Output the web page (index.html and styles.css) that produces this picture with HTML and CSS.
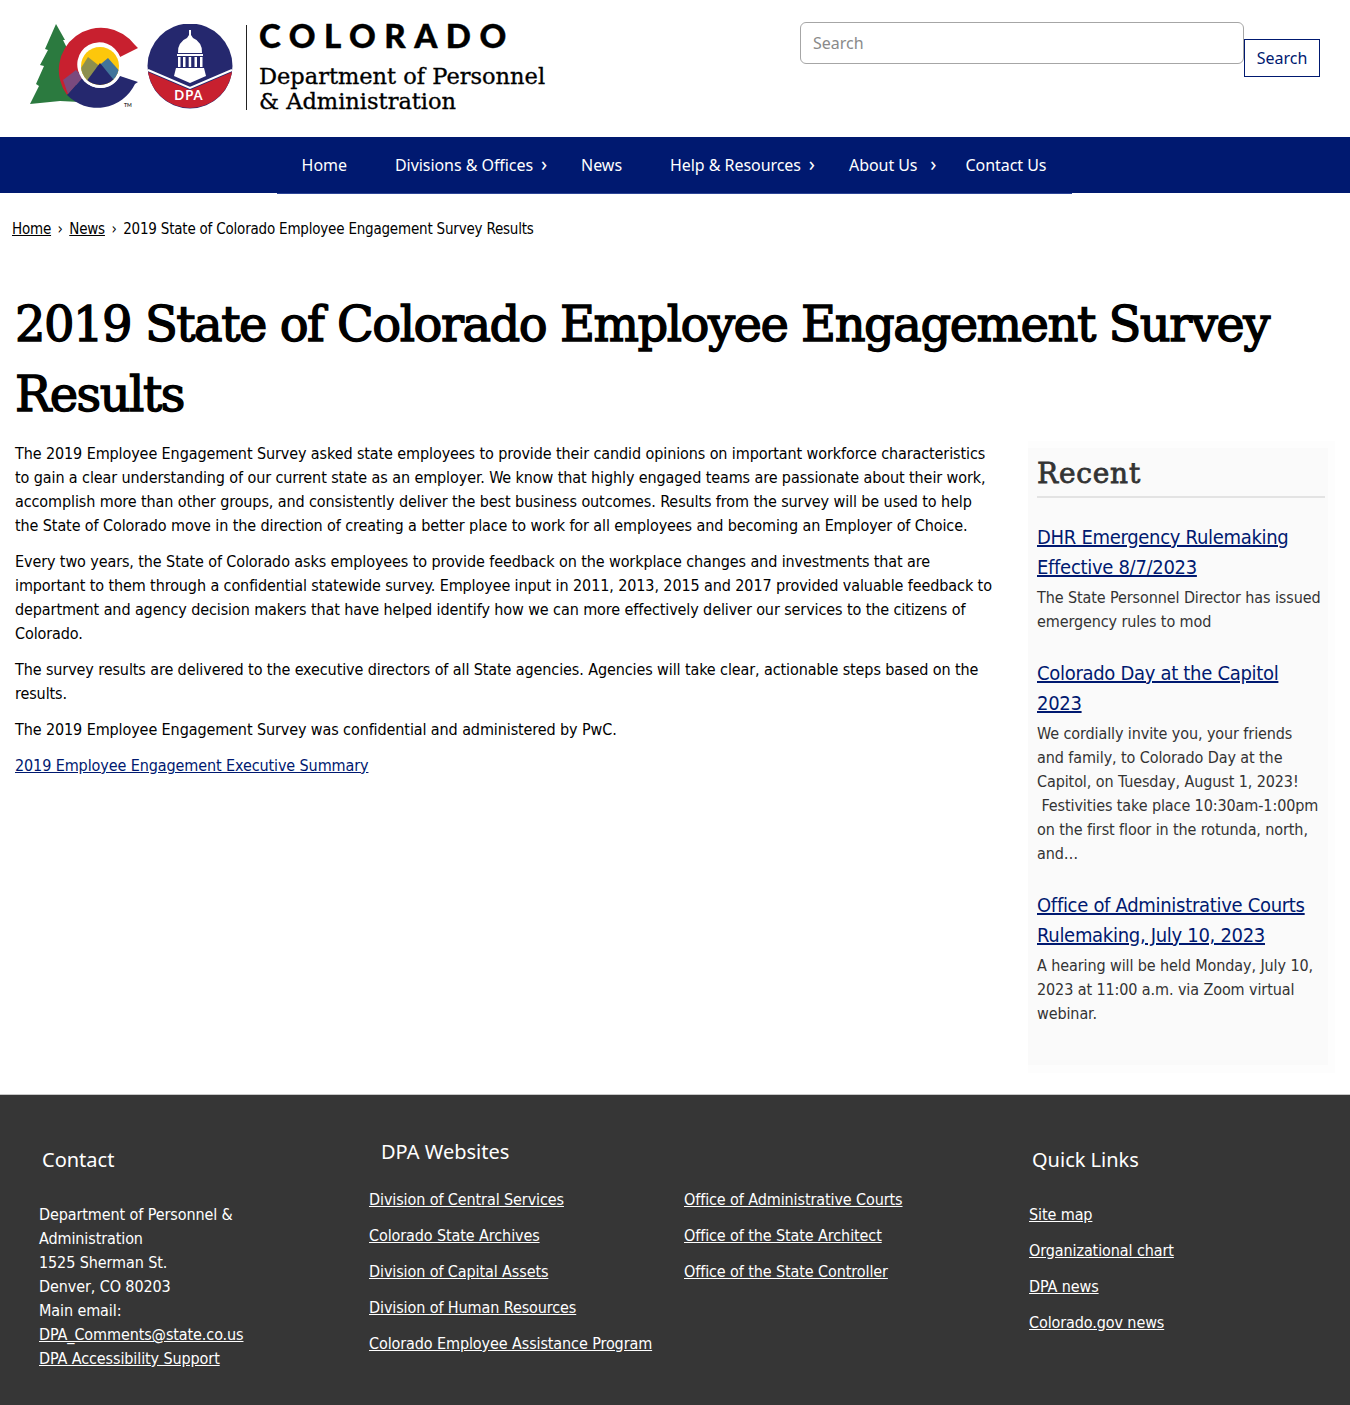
FILE: index.html
```html
<!DOCTYPE html>
<html lang="en">
<head>
<meta charset="utf-8">
<title>2019 State of Colorado Employee Engagement Survey Results</title>
<link rel="stylesheet" href="styles.css">
</head>
<body>
<header class="top">
  <a class="logo" href="#">
    <svg class="marks" width="206" height="90" viewBox="0 0 206 90">
      <path fill="#2b7a3f" d="M26 0 L35 16 L33 16 L39 28 L37 28 L44 50 L50 78 L30 77 L0 80 L9 62 L6 60 L14 42 L10 41 L18 26 L15 25 Z"/>
      <path fill="#c8202f" d="M108 24 L105 21 A42 42 0 1 0 37 71 L52 54 A22 22 0 1 1 90 33 Z"/>
      <path fill="#25286e" d="M37 71 A42 42 0 0 0 105 60 L108 58 L90 52 A22 22 0 0 1 52 54 Z"/>
      <path fill="#7a4a7e" d="M33 56 L46 46 L53 53 L38 70 Z"/>
      <circle cx="70" cy="42" r="22" fill="#fff"/>
      <clipPath id="sun"><circle cx="70" cy="42" r="19"/></clipPath>
      <g clip-path="url(#sun)">
        <rect x="48" y="20" width="44" height="44" fill="#fdc70b"/>
        <path fill="#8d8f4e" d="M46 52 L58 33 L72 44 L56 60 Z"/>
        <path fill="#41749a" d="M66 44 L78 34 L94 52 L84 56 Z"/>
        <path fill="#25286e" d="M50 66 L70 39 L92 66 Z"/>
      </g>
      <circle cx="160" cy="42" r="42.5" fill="#25286e"/>
      <path fill="#c8202f" d="M118 48 L160 66 L202 48 A42.5 42.5 0 0 1 118 48 Z"/>
      <path fill="none" stroke="#fff" stroke-width="2" d="M118 46 L160 64 L202 46"/>
      <path fill="#fff" d="M159 6 h2 v5 l2 3 a14 14 0 0 1 9 15 h-24 a14 14 0 0 1 9 -15 l2 -3 Z M147 30 h26 v2 h-26 Z M148 33 h2.500 v10 h-2.500 Z M153 33 h2.500 v10 h-2.500 Z M158.700 33 h2.500 v10 h-2.500 Z M164.500 33 h2.500 v10 h-2.500 Z M170 33 h2.500 v10 h-2.500 Z M146 44 h28 l2 8 l-16 7 l-16 -7 Z"/>
    </svg>
    <span class="rule"></span>
    <span class="wordmark">
      <span class="state">COLORADO</span>
      <span class="dept">Department of Personnel<br>&amp; Administration</span>
    </span>
    <span class="dpa-mark">DPA</span>
    <span class="tm">TM</span>
  </a>
  <form class="search">
    <input class="search-input" type="text" placeholder="Search">
    <button class="search-btn" type="button">Search</button>
  </form>
</header>

<nav class="nav">
  <ul class="nav-list">
    <li class="nav-item"><a href="#">Home</a></li>
    <li class="nav-item has-sub"><a href="#">Divisions &amp; Offices</a></li>
    <li class="nav-item"><a href="#">News</a></li>
    <li class="nav-item has-sub"><a href="#">Help &amp; Resources</a></li>
    <li class="nav-item has-sub wide"><a href="#">About Us</a></li>
    <li class="nav-item"><a href="#">Contact Us</a></li>
  </ul>
</nav>

<div class="crumbs"><a href="#">Home</a><span class="sep">›</span><a href="#">News</a><span class="sep">›</span><span>2019 State of Colorado Employee Engagement Survey Results</span></div>

<h1 class="title">2019 State of Colorado Employee Engagement Survey Results</h1>

<main class="layout">
  <article class="body-text">
    <p>The 2019 Employee Engagement Survey asked state employees to provide their candid opinions on important workforce characteristics to gain a clear understanding of our current state as an employer. We know that highly engaged teams are passionate about their work, accomplish more than other groups, and consistently deliver the best business outcomes. Results from the survey will be used to help the State of Colorado move in the direction of creating a better place to work for all employees and becoming an Employer of Choice.</p>
    <p>Every two years, the State of Colorado asks employees to provide feedback on the workplace changes and investments that are important to them through a confidential statewide survey. Employee input in 2011, 2013, 2015 and 2017 provided valuable feedback to department and agency decision makers that have helped identify how we can more effectively deliver our services to the citizens of Colorado.</p>
    <p>The survey results are delivered to the executive directors of all State agencies. Agencies will take clear, actionable steps based on the results.</p>
    <p>The 2019 Employee Engagement Survey was confidential and administered by PwC.</p>
    <p><a href="#">2019 Employee Engagement Executive Summary</a></p>
  </article>
  <aside class="recent">
    <h2 class="recent-title">Recent</h2>
    <section class="recent-item">
      <h3><a href="#">DHR Emergency Rulemaking Effective 8/7/2023</a></h3>
      <p>The State Personnel Director has issued emergency rules to mod</p>
    </section>
    <section class="recent-item">
      <h3><a href="#">Colorado Day at the Capitol 2023</a></h3>
      <p>We cordially invite you, your friends and family, to Colorado Day at the Capitol, on Tuesday, August 1, 2023! &nbsp;Festivities take place 10:30am-1:00pm on the first floor in the rotunda, north, and…</p>
    </section>
    <section class="recent-item">
      <h3><a href="#">Office of Administrative Courts Rulemaking, July 10, 2023</a></h3>
      <p>A hearing will be held Monday, July 10, 2023 at 11:00 a.m. via Zoom virtual webinar.</p>
    </section>
  </aside>
</main>

<footer class="footer">
  <div class="col col-contact">
    <h2 class="foot-title">Contact</h2>
    <p>Department of Personnel &amp; Administration<br>1525 Sherman St.<br>Denver, CO 80203<br>Main email:<br><a href="#">DPA_Comments@state.co.us</a><br><a href="#">DPA Accessibility Support</a></p>
  </div>
  <div class="col col-sites">
    <h2 class="foot-title">DPA Websites</h2>
    <div class="site-cols">
      <ul class="links">
        <li><a href="#">Division of Central Services</a></li>
        <li><a href="#">Colorado State Archives</a></li>
        <li><a href="#">Division of Capital Assets</a></li>
        <li><a href="#">Division of Human Resources</a></li>
        <li><a href="#">Colorado Employee Assistance Program</a></li>
      </ul>
      <ul class="links">
        <li><a href="#">Office of Administrative Courts</a></li>
        <li><a href="#">Office of the State Architect</a></li>
        <li><a href="#">Office of the State Controller</a></li>
      </ul>
    </div>
  </div>
  <div class="col col-quick">
    <h2 class="foot-title">Quick Links</h2>
    <ul class="links">
      <li><a href="#">Site map</a></li>
      <li><a href="#">Organizational chart</a></li>
      <li><a href="#">DPA news</a></li>
      <li><a href="#">Colorado.gov news</a></li>
    </ul>
  </div>
</footer>
</body>
</html>
```
FILE: styles.css
```css
* { box-sizing: border-box; }
body { margin: 0; background: #fff; color: #000; font-family: "DejaVu Sans Condensed", "DejaVu Sans", sans-serif; font-size: 16px; line-height: 24px; letter-spacing: -.1px; }
a { color: inherit; }

.top { height: 137px; display: flex; justify-content: space-between; padding: 22px 30px 0 30px; letter-spacing: 0; }
.logo { position: relative; display: flex; align-items: flex-start; height: 90px; text-decoration: none; color: #000; }
.marks { display: block; flex: none; margin-top: 2px; }
.rule { width: 1px; height: 85px; background: #222; margin: 3px 12px 0 10px; flex: none; }
.wordmark { display: flex; flex-direction: column; margin-top: -2px; }
.state { font-family: Lato, sans-serif; font-weight: 900; font-size: 33px; letter-spacing: 8.5px; line-height: 30px; -webkit-text-stroke: .4px #000; }
.dept { font-family: "DejaVu Serif", serif; font-size: 22.500px; line-height: 24.500px; margin-top: 14px; -webkit-text-stroke: .35px #000; }
.dpa-mark { position: absolute; left: 129px; top: 66px; width: 60px; text-align: center; color: #fff; font: 700 13px/14px Lato, sans-serif; letter-spacing: 1px; }
.tm { position: absolute; left: 94px; top: 80px; font: 700 5px/6px Lato, sans-serif; color: #333; }

.search { display: flex; align-items: flex-start; }
.search-input { width: 444px; height: 42px; border: 1px solid #a6a6a6; border-radius: 6px; padding: 0 12px; font: 16px "Noto Sans", sans-serif; background: #fff; }
.search-input::placeholder { color: #8a8a8a; opacity: 1; }
.search-btn { width: 76px; height: 38px; margin-top: 17px; border: 1px solid #001970; background: #fff; color: #001970; font: 16px "Noto Sans", sans-serif; padding: 0; }

.nav { background: #001970; height: 56px; }
.nav-list { list-style: none; margin: 0 auto; padding: 0; display: flex; justify-content: center; width: 795px; height: 57px; border-bottom: 1px solid #2d4596; transform: translateX(-1px); }
.nav-item { position: relative; padding: 0 24px; font: 16px/56px "Noto Sans", sans-serif; color: #fff; letter-spacing: -.05px; }
.nav-item a { text-decoration: none; }
.has-sub::after { content: "›"; position: absolute; right: 10px; top: -1px; font-size: 20px; }
.wide::after { right: 5px; }

.crumbs { padding: 24px 12px 0; font-size: 15px; letter-spacing: -.2px; line-height: 24px; height: 60px; }
.sep { margin: 0 6.500px; }

.title { margin: 36px 15px 0; font: 400 48px/70px "DejaVu Serif", serif; letter-spacing: -1.5px; -webkit-text-stroke: 1.4px #000; }

.layout { display: flex; align-items: flex-start; padding: 13px 15px 0; justify-content: space-between; height: 665px; }
.body-text { width: 980px; }
.body-text p { margin: 0 0 12px; }
.body-text a { color: #001970; }
.recent { width: 307px; height: 632px; background: #fafafa; box-shadow: inset -7px -8px 0 #fdfdfd, inset 0 7px 0 #fdfdfd; padding: 13px 10px 0 9px; color: #333; margin-top: -1px; }
.recent-title { margin: 0 0 24px; padding-bottom: 2px; border-bottom: 2px solid #e3e3e3; font: 400 28px/40px "DejaVu Serif", serif; letter-spacing: .8px; color: #333; -webkit-text-stroke: .8px #333; }
.recent-item { margin-bottom: 24px; }
.recent-item h3 { margin: 0 0 4px; font-size: 20px; line-height: 30px; font-weight: 400; letter-spacing: -.3px; }
.recent-item h3 a { color: #001970; }
.recent-item p { margin: 0; max-width: 285px; }

.footer { background: #363636; color: #fff; height: 311px; display: flex; border-top: 1px solid #c8c8c8; }
.col { flex: none; }
.foot-title { margin: 0; font: 400 20px/28px "Noto Sans", sans-serif; letter-spacing: 0; }
.col-contact { width: 329px; padding: 51px 0 0 39px; }
.col-contact .foot-title { padding-left: 3px; margin-bottom: 29px; }
.col-contact p { margin: 0; width: 215px; }
.col-sites { width: 660px; padding: 43px 0 0 40px; }
.col-sites .foot-title { padding-left: 12px; margin-bottom: 22px; }
.site-cols { display: flex; }
.site-cols .links { flex: 0 0 315px; }
.site-cols .links + .links { flex: 1 1 0; }
.links { list-style: none; margin: 0; padding: 0; }
.links li { margin-bottom: 12px; }
.col-quick { padding: 51px 0 0 40px; }
.col-quick .foot-title { padding-left: 3px; margin-bottom: 29px; }
```
